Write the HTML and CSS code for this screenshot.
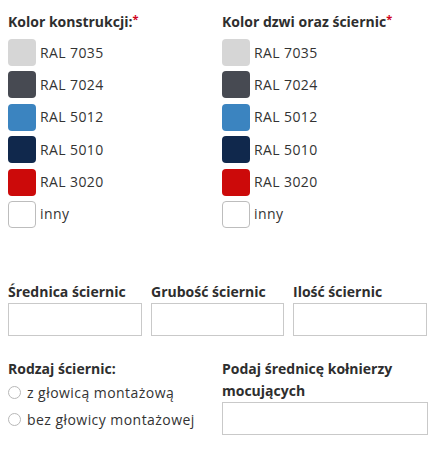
FILE: index.html
```html
<!DOCTYPE html>
<html lang="pl">
<head>
<meta charset="utf-8">
<link rel="stylesheet" href="styles.css">
</head>
<body>
<form class="form">
  <div class="colors">
    <div class="col">
      <div class="heading">Kolor konstrukcji:<span class="req">*</span></div>
      <ul class="swatches">
        <li><span class="sw c7035"></span>RAL 7035</li>
        <li><span class="sw c7024"></span>RAL 7024</li>
        <li><span class="sw c5012"></span>RAL 5012</li>
        <li><span class="sw c5010"></span>RAL 5010</li>
        <li><span class="sw c3020"></span>RAL 3020</li>
        <li><span class="sw other"></span>inny</li>
      </ul>
    </div>
    <div class="col">
      <div class="heading">Kolor dzwi oraz ściernic<span class="req">*</span></div>
      <ul class="swatches">
        <li><span class="sw c7035"></span>RAL 7035</li>
        <li><span class="sw c7024"></span>RAL 7024</li>
        <li><span class="sw c5012"></span>RAL 5012</li>
        <li><span class="sw c5010"></span>RAL 5010</li>
        <li><span class="sw c3020"></span>RAL 3020</li>
        <li><span class="sw other"></span>inny</li>
      </ul>
    </div>
  </div>

  <div class="fields3">
    <label class="field"><span class="heading">Średnica ściernic</span><span class="input"></span></label>
    <label class="field"><span class="heading">Grubość ściernic</span><span class="input"></span></label>
    <label class="field"><span class="heading">Ilość ściernic</span><span class="input"></span></label>
  </div>

  <div class="bottom">
    <div class="col">
      <div class="heading">Rodzaj ściernic:</div>
      <div class="radio"><span class="dot"></span>z głowicą montażową</div>
      <div class="radio"><span class="dot"></span>bez głowicy montażowej</div>
    </div>
    <div class="col">
      <div class="heading tall">Podaj średnicę kołnierzy mocujących</div>
      <span class="input"></span>
    </div>
  </div>
</form>
</body>
</html>
```
FILE: styles.css
```css
* { box-sizing: border-box; }
html, body { margin: 0; background: #fff; }
body {
  font-family: "Open Sans", "Liberation Sans", sans-serif;
  font-size: 14px;
  color: #333;
}
.form {
  width: 436px;
  padding: 12px 8px 0 8px;
}
.heading {
  display: block;
  font-weight: 700;
  line-height: 20px;
  color: #2e2e2e;
  white-space: nowrap;
  letter-spacing: 0;
}
.req { color: #d0021b; font-size: 11px; vertical-align: 4px; line-height: 0; }
.colors {
  display: grid;
  grid-template-columns: 214px 206px;
}
.swatches {
  list-style: none;
  margin: 7px 0 0 0;
  padding: 0;
  display: flex;
  flex-direction: column;
  gap: 5.4px;
}
.swatches li {
  display: flex;
  align-items: center;
  gap: 4px;
  height: 27px;
  line-height: 20px;
  letter-spacing: 0.4px;
}
.sw {
  width: 28px;
  height: 27px;
  border-radius: 4px;
  flex: none;
}
.c7035 { background: #d6d6d6; }
.c7024 { background: #474a52; }
.c5012 { background: #3b84c0; }
.c5010 { background: #10284c; }
.c3020 { background: #cc0a0a; }
.other { background: #fff; border: 1px solid #bdbdbd; }

.fields3 {
  margin-top: 54px;
  display: grid;
  grid-template-columns: 134px 133px 134px;
  gap: 9px;
  width: 420px;
}
.field { display: flex; flex-direction: column; gap: 1px; }
.input {
  display: block;
  height: 33px;
  border: 1px solid #c9c9c9;
  background: #fff;
}

.bottom {
  margin-top: 22px;
  display: grid;
  grid-template-columns: 214px 206px;
}
.bottom .heading { line-height: 22px; }
.bottom .heading.tall { white-space: normal; margin-bottom: 0; }
.radio {
  display: flex;
  align-items: center;
  gap: 6px;
  height: 27px;
  letter-spacing: 0.45px;
}
.bottom .col:first-child .heading { margin-bottom: -1px; }
.dot {
  width: 13px;
  height: 13px;
  border: 1px solid #b8b8b8;
  border-radius: 50%;
  flex: none;
  background: #fff;
}
```
